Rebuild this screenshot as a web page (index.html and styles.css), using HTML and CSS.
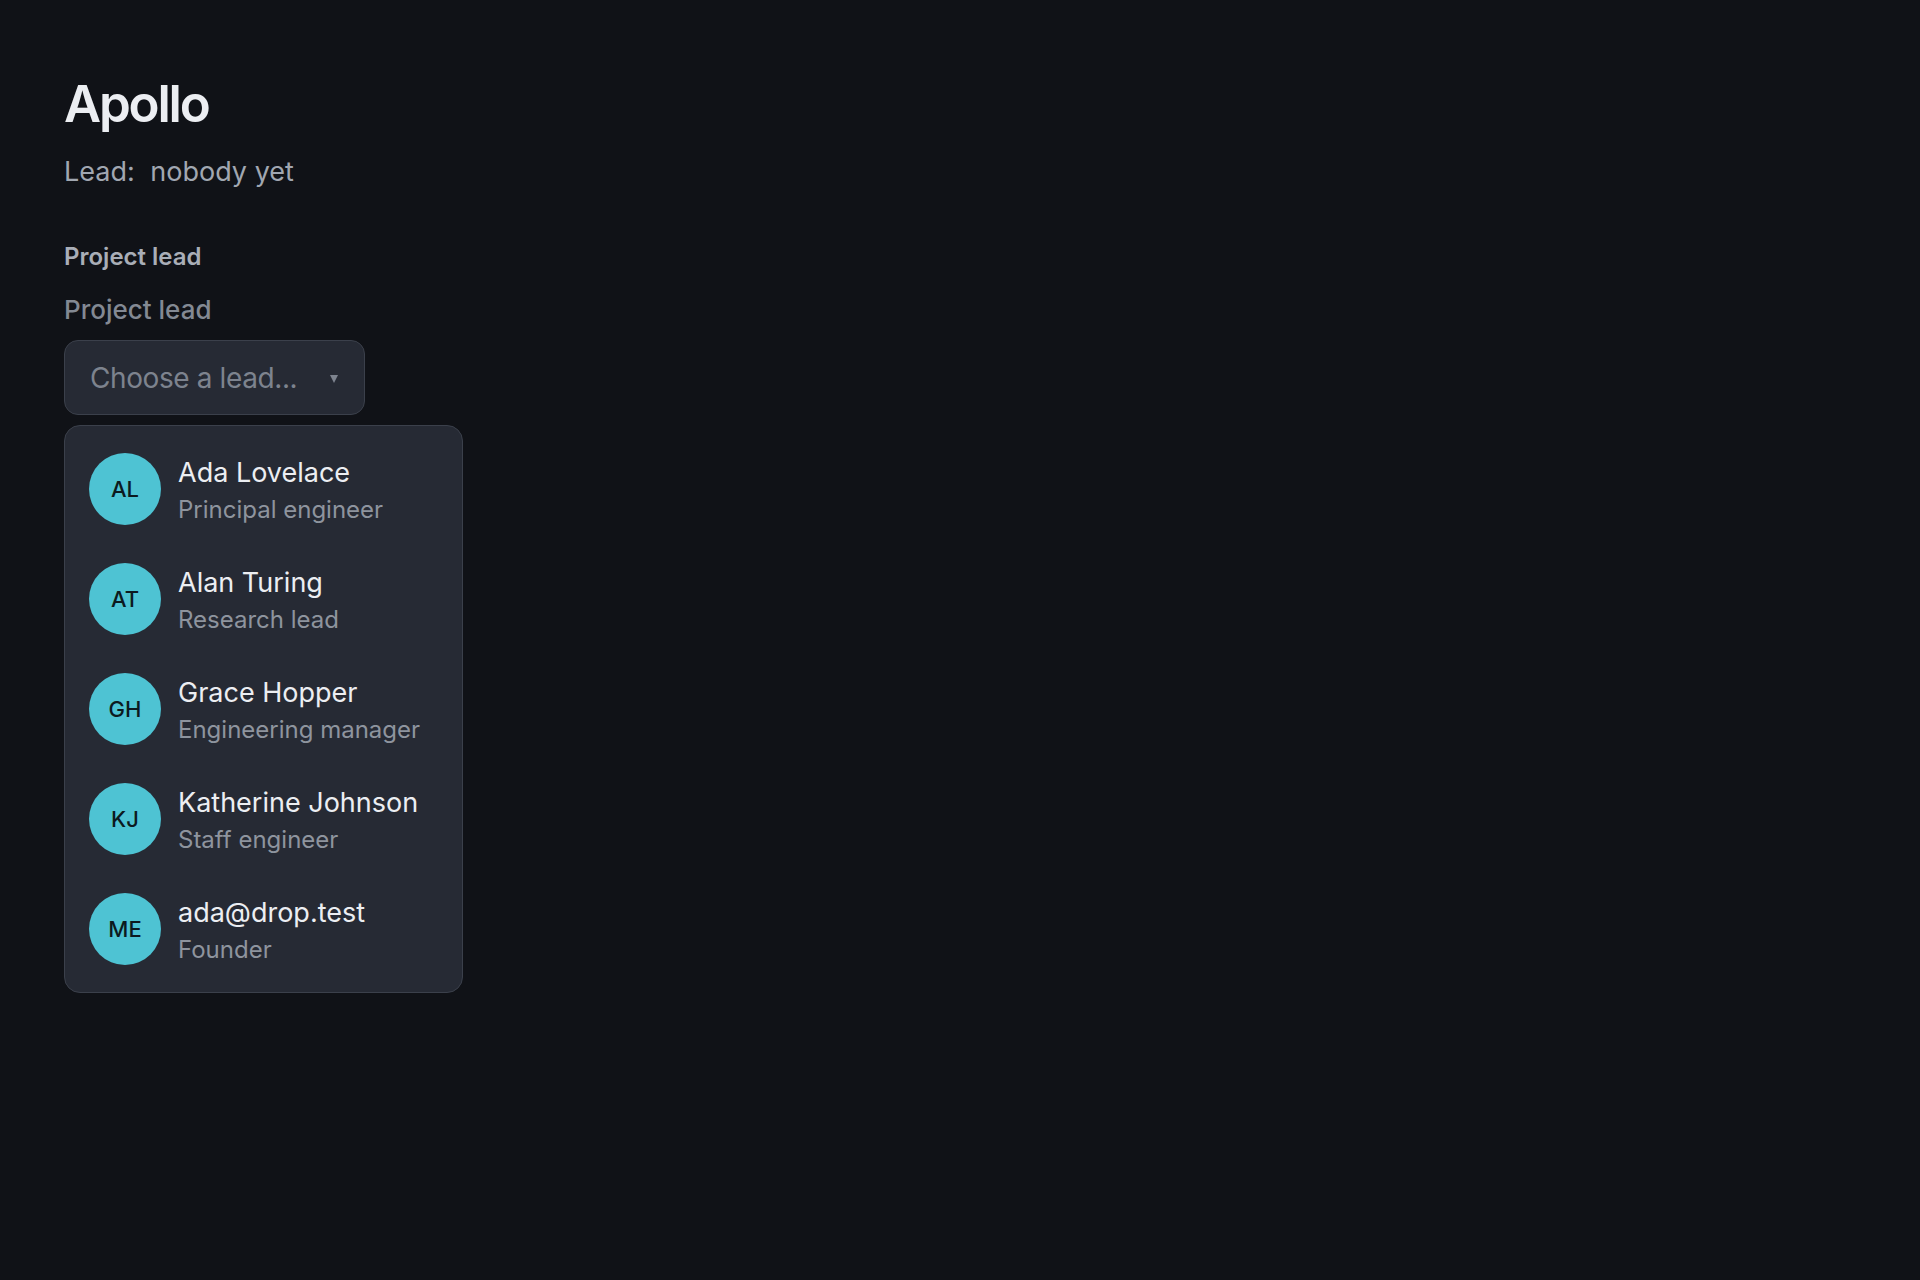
FILE: index.html
```html
<!DOCTYPE html>
<html lang="en">
<head>
<meta charset="utf-8">
<title>Apollo</title>
<link rel="stylesheet" href="styles.css">
</head>
<body>
<main class="page">
  <h1 class="title">Apollo</h1>
  <p class="lead-line">Lead: <span class="lead-value">nobody yet</span></p>

  <section class="field">
    <h2 class="field-heading">Project lead</h2>
    <label class="field-label">Project lead</label>
    <div class="picker">
      <button class="select" type="button">
        <span class="select-placeholder">Choose a lead...</span>
        <span class="select-caret"></span>
      </button>
      <ul class="menu">
        <li class="option">
          <span class="avatar">AL</span>
          <span class="person"><span class="person-name">Ada Lovelace</span><span class="person-role">Principal engineer</span></span>
        </li>
        <li class="option">
          <span class="avatar">AT</span>
          <span class="person"><span class="person-name">Alan Turing</span><span class="person-role">Research lead</span></span>
        </li>
        <li class="option">
          <span class="avatar">GH</span>
          <span class="person"><span class="person-name">Grace Hopper</span><span class="person-role">Engineering manager</span></span>
        </li>
        <li class="option">
          <span class="avatar">KJ</span>
          <span class="person"><span class="person-name">Katherine Johnson</span><span class="person-role">Staff engineer</span></span>
        </li>
        <li class="option">
          <span class="avatar">ME</span>
          <span class="person"><span class="person-name">ada@drop.test</span><span class="person-role">Founder</span></span>
        </li>
      </ul>
    </div>
  </section>
</main>
</body>
</html>
```

FILE: styles.css
```css
* {
  box-sizing: border-box;
}

html,
body {
  margin: 0;
  min-height: 100%;
  background: #101217;
}

body {
  font-family: Inter, "Noto Sans", "Liberation Sans", sans-serif;
  color: #e8eaee;
}

.page {
  padding: 72px 64px;
}

.title {
  margin: 0;
  font-size: 51px;
  line-height: 64px;
  font-weight: 600;
  letter-spacing: -2.2px;
  color: #eceef2;
}

.lead-line {
  margin: 18px 0 0;
  font-size: 27px;
  line-height: 36px;
  color: #a1a7b1;
}

.lead-value {
  margin-left: 8px;
}

.field {
  margin-top: 51px;
}

.field-heading {
  margin: 0;
  font-size: 24px;
  line-height: 32px;
  font-weight: 600;
  color: #a9aeb7;
}

.field-label {
  display: block;
  margin-top: 19px;
  font-size: 26px;
  line-height: 36px;
  font-weight: 500;
  color: #838993;
}

.picker {
  margin-top: 12px;
}

.select {
  display: flex;
  align-items: center;
  justify-content: space-between;
  width: 301px;
  height: 75px;
  padding: 0 26px 0 25px;
  background: #262a34;
  border: 1.5px solid #3b404b;
  border-radius: 14px;
  font: inherit;
  cursor: pointer;
}

.select-placeholder {
  font-size: 28px;
  line-height: 36px;
  letter-spacing: -0.4px;
  color: #7d838e;
}

.select-caret {
  width: 0;
  height: 0;
  margin-top: 2px;
  border-left: 4.5px solid transparent;
  border-right: 4.5px solid transparent;
  border-top: 8px solid #7d838e;
}

.menu {
  width: 399px;
  margin: 10px 0 0;
  padding: 8px;
  list-style: none;
  background: #262a34;
  border: 1.5px solid #3b404b;
  border-radius: 16px;
}

.option {
  display: flex;
  align-items: center;
  gap: 17px;
  padding: 18px 16px;
}

.avatar {
  flex: none;
  display: flex;
  align-items: center;
  justify-content: center;
  width: 72px;
  height: 72px;
  border-radius: 50%;
  background: #4ec3d3;
  color: #0c1a20;
  font-size: 22px;
  font-weight: 500;
}

.person {
  display: flex;
  flex-direction: column;
}

.person-name {
  font-size: 27px;
  line-height: 42px;
  font-weight: 400;
  color: #eceef2;
}

.person-role {
  font-size: 24px;
  line-height: 32px;
  color: #8e949e;
}
```
